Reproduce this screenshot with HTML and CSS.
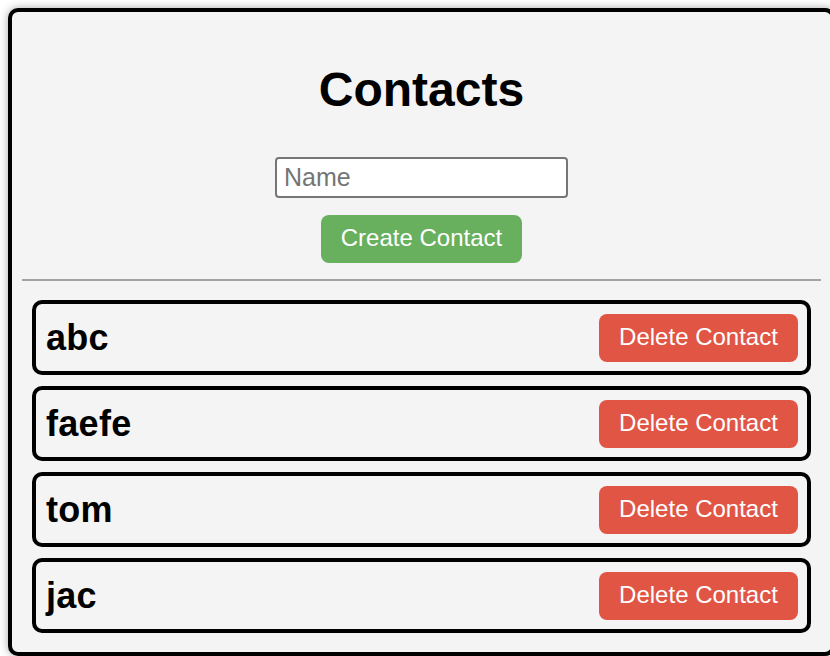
FILE: index.html
```html
<!DOCTYPE html>
<html lang="en">
<head>
<meta charset="utf-8">
<title>Contacts</title>
<link rel="stylesheet" href="styles.css">
</head>
<body>
<div class="app">
  <h1 class="title">Contacts</h1>
  <form class="create-form">
    <input class="name-input" type="text" placeholder="Name">
    <button type="button" class="btn btn-create">Create Contact</button>
  </form>
  <hr class="divider">
  <ul class="contact-list">
    <li class="contact"><h2 class="contact-name">abc</h2><button type="button" class="btn btn-delete">Delete Contact</button></li>
    <li class="contact"><h2 class="contact-name">faefe</h2><button type="button" class="btn btn-delete">Delete Contact</button></li>
    <li class="contact"><h2 class="contact-name">tom</h2><button type="button" class="btn btn-delete">Delete Contact</button></li>
    <li class="contact"><h2 class="contact-name">jac</h2><button type="button" class="btn btn-delete">Delete Contact</button></li>
  </ul>
</div>
</body>
</html>
```

FILE: styles.css
```css
html, body {
  margin: 0;
  padding: 0;
  background: #ffffff;
  overflow: hidden;
}

body {
  padding: 8px;
  font-family: "Liberation Sans", Arial, Helvetica, sans-serif;
  color: #000;
}

.app {
  box-sizing: border-box;
  width: 827px;
  border: 4px solid #000;
  border-radius: 10px;
  background: #f4f4f4;
  box-shadow: 0 0 9px rgba(0, 0, 0, 0.35);
  padding: 0 10px 19px;
}

.title {
  margin: 50px 0 40px;
  font-size: 48px;
  line-height: 55px;
  font-weight: bold;
  text-align: center;
}

.create-form {
  display: flex;
  flex-direction: column;
  align-items: center;
  gap: 17px;
  margin: 0;
}

.name-input {
  box-sizing: border-box;
  width: 293px;
  height: 41px;
  border: 2px solid #767676;
  border-radius: 4px;
  background: #fff;
  padding: 0 7px;
  font-family: "Liberation Sans", Arial, sans-serif;
  font-size: 25px;
  color: #000;
  outline: none;
}

.name-input::placeholder {
  color: #757575;
}

.btn {
  box-sizing: border-box;
  height: 48px;
  border: 0;
  border-radius: 8px;
  color: #fff;
  font-family: "Liberation Sans", Arial, sans-serif;
  font-size: 24px;
  line-height: 28px;
  padding: 0 0 2px;
  white-space: nowrap;
  cursor: pointer;
}

.btn-create {
  width: 201px;
  background: #68af5e;
}

.btn-delete {
  width: 199px;
  background: #e15545;
}

.divider {
  margin: 16px 0 19px;
  border: 0;
  height: 2px;
  background: #a3a3a3;
}

.contact-list {
  list-style: none;
  margin: 0;
  padding: 0 10px;
  display: flex;
  flex-direction: column;
  gap: 11px;
}

.contact {
  box-sizing: border-box;
  height: 75px;
  border: 4px solid #000;
  border-radius: 10px;
  padding: 0 9px 0 10px;
  display: flex;
  align-items: center;
  justify-content: space-between;
}

.contact-name {
  margin: 0;
  font-size: 36px;
  line-height: 42px;
  font-weight: bold;
  letter-spacing: 0.3px;
}
```
